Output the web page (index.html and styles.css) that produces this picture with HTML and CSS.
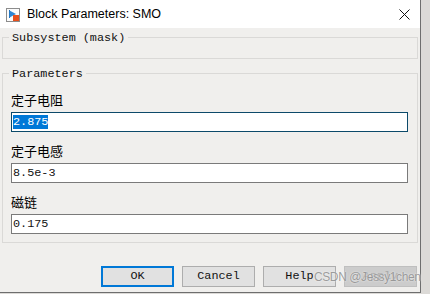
FILE: index.html
```html
<!DOCTYPE html>
<html>
<head>
<meta charset="utf-8">
<link rel="stylesheet" href="styles.css">
</head>
<body>
<div class="window">
  <div class="titlebar">
    <svg class="app-icon" width="14" height="14" viewBox="0 0 14 14">
      <rect x="0.5" y="0.5" width="13" height="13" fill="#fbfbfb" stroke="#8c8c8c"/>
      <line x1="3.5" y1="2" x2="3.5" y2="10" stroke="#1f6fb8" stroke-width="1"/>
      <polygon points="3.5,2.5 10,6 3.5,9.5" fill="#2f86d2"/>
      <rect x="7" y="7" width="6" height="6" fill="#e8501c"/>
    </svg>
    <span class="title">Block Parameters: SMO</span>
    <svg class="close" width="11" height="11" viewBox="0 0 11 11">
      <path d="M0.5 0.5 L10.5 10.5 M10.5 0.5 L0.5 10.5" stroke="#111" stroke-width="1"/>
    </svg>
  </div>
  <div class="content">
    <div class="group group-mask">
      <span class="legend">Subsystem (mask)</span>
    </div>
    <div class="group group-params">
      <span class="legend">Parameters</span>
      <div class="field">
        <div class="label">定子电阻</div>
        <div class="input focused"><span class="sel">2.875</span></div>
      </div>
      <div class="field">
        <div class="label">定子电感</div>
        <div class="input">8.5e-3</div>
      </div>
      <div class="field">
        <div class="label">磁链</div>
        <div class="input">0.175</div>
      </div>
    </div>
    <div class="buttons">
      <div class="btn default">OK</div>
      <div class="btn">Cancel</div>
      <div class="btn">Help</div>
      <div class="btn disabled">Apply</div>
    </div>
  </div>
  <div class="watermark">CSDN @Jessy1chen</div>
</div>
</body>
</html>
```

FILE: styles.css
```css
html, body {
  margin: 0;
  padding: 0;
}
body {
  width: 430px;
  height: 294px;
  background: #dcdad7;
  overflow: hidden;
}
.window {
  position: relative;
  width: 420px;
  height: 292px;
  border-right: 1px solid #6e6e6e;
  border-bottom: 1px solid #6e6e6e;
  background: #f0efed;
  display: flex;
  flex-direction: column;
}
.titlebar {
  height: 28px;
  background: #ffffff;
  display: flex;
  align-items: center;
  flex-shrink: 0;
}
.app-icon {
  margin-left: 6px;
  margin-top: 1px;
}
.title {
  margin-left: 7px;
  font-family: "Liberation Sans", Arial, sans-serif;
  font-size: 12.5px;
  color: #000;
}
.close {
  margin-left: auto;
  margin-right: 10px;
}
.content {
  padding: 9px 0 0 2px;
  font-family: "Liberation Mono", "Courier New", monospace;
  font-size: 11.8px;
  color: #111;
}
.group {
  position: relative;
  width: 414px;
  border: 1px solid #dad9d7;
}
.group-mask {
  height: 20px;
}
.group-params {
  margin-top: 14px;
  padding: 18px 9px 8px 8px;
  width: 397px;
  display: flex;
  flex-direction: column;
  gap: 11px;
}
.legend {
  position: absolute;
  top: -8px;
  left: 6px;
  padding: 0 3px;
  background: #f0efed;
  line-height: 16px;
}
.field {
  display: flex;
  flex-direction: column;
  gap: 4px;
}
.label {
  font-family: "Noto Sans CJK SC", "Noto Sans", sans-serif;
  font-size: 13px;
  line-height: 16px;
  color: #000;
}
.input {
  height: 18px;
  border: 1px solid #7a7a7a;
  background: #fff;
  line-height: 18px;
  padding-left: 1px;
  white-space: pre;
}
.input.focused {
  border-color: #0c4a6a;
}
.sel {
  background: #0078d7;
  color: #fff;
}
.buttons {
  display: flex;
  gap: 8px;
  padding-left: 99px;
  margin-top: 23px;
}
.btn {
  box-sizing: border-box;
  width: 73px;
  height: 21px;
  border: 1px solid #adadad;
  background: #e1e1e1;
  text-align: center;
  line-height: 19px;
}
.btn.default {
  border: 2px solid #0078d7;
  line-height: 17px;
}
.btn.disabled {
  color: #a8a8a8;
  background: #cccccc;
  border-color: #bfbfbf;
}
.watermark {
  position: absolute;
  left: 314px;
  top: 270px;
  font-family: "Liberation Sans", Arial, sans-serif;
  font-size: 12px;
  letter-spacing: -0.4px;
  color: rgba(140, 140, 140, 0.85);
  text-shadow: 0 0 2px rgba(255,255,255,0.9);
  white-space: nowrap;
}
```
